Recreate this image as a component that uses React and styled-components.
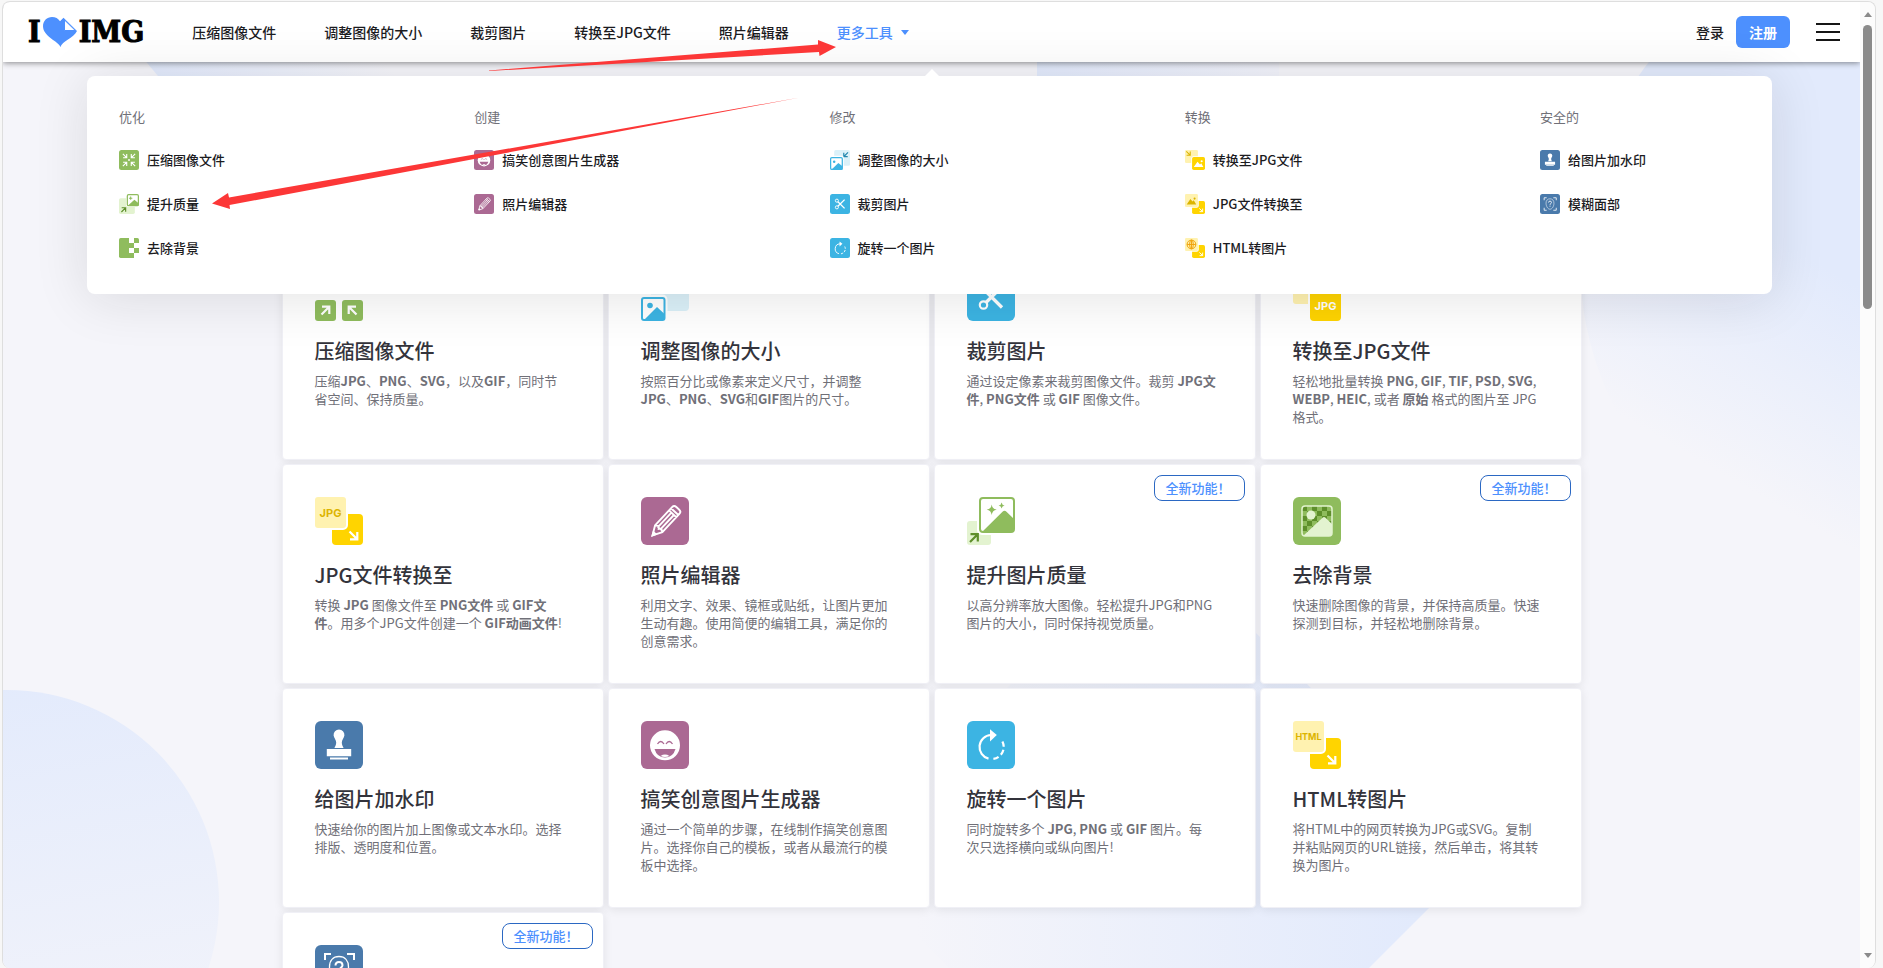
import React, { useState } from "react";
import styled, { createGlobalStyle } from "styled-components";

const GlobalStyle = createGlobalStyle`
  * {
    box-sizing: border-box;
  }
  body {
    margin: 0;
    background: #f7f7f7;
    color: #1c1c1f;
    font-family: "Noto Sans CJK SC", "Noto Sans", sans-serif;
    font-size: 14px;
  }
  a {
    color: inherit;
    text-decoration: none;
  }
`;

// Window
const Page = styled.div`
  position: relative;
  height: 100vh;
  padding: 1px 7px 0 2px;
  overflow: hidden;
`;

const Frame = styled.div`
  display: flex;
  height: 100%;
  border: 1px solid #dedede;
  border-bottom: 0;
  border-radius: 8px;
  overflow: hidden;
`;

const Viewport = styled.div`
  position: relative;
  flex: 1;
  min-width: 0;
  overflow: hidden;
  background: #f5f5fa;
`;

const ScrollBar = styled.div`
  width: 15px;
  padding: 10px 3px;
  display: flex;
  flex-direction: column;
  align-items: center;
  gap: 8px;
  background: #fcfcfc;
`;

const ScrollThumb = styled.div`
  width: 9px;
  height: 30%;
  border-radius: 5px;
  background: #8b8b8b;
`;

const ScrollArrow = styled.div`
  border: 4px solid transparent;
  border-top-width: ${(props) => (props.$down ? "5px" : "0")};
  border-bottom-width: ${(props) => (props.$down ? "0" : "5px")};
  border-top-color: ${(props) => (props.$down ? "#8b8b8b" : "transparent")};
  border-bottom-color: ${(props) => (props.$down ? "transparent" : "#8b8b8b")};
  margin-top: ${(props) => (props.$down ? "auto" : "0")};
`;

// Background shapes
const Shape = styled.div`
  position: absolute;
`;

const CircleLeft = styled(Shape)`
  left: -208px;
  top: 688px;
  width: 424px;
  height: 424px;
  border-radius: 50%;
  background: linear-gradient(170deg, #e2eafc, #f5f5fa 100%);
`;

const CircleRight = styled(Shape)`
  right: -370px;
  top: -65px;
  width: 650px;
  height: 650px;
  border-radius: 50%;
  background: linear-gradient(30deg, #f5f5fa 19%, #e2eafc 45%);
`;

const Diamond = styled(Shape)`
  left: 50%;
  top: 628px;
  width: 454px;
  height: 454px;
  transform: rotate(45deg);
  background: linear-gradient(45deg, #f5f5fa 12%, #e2eafc 90%);
`;

const TopLeftShape = styled(Shape)`
  left: 202px;
  top: 30px;
  width: 240px;
  height: 200px;
  transform: skewX(40deg);
  background: linear-gradient(90deg, #e2eafc, #f5f5fa);
`;

const TopRightShape = styled(Shape)`
  left: 1034px;
  top: 0;
  width: 242px;
  height: 200px;
  background: linear-gradient(90deg, #e2eafc, #f2f3fb);
`;

// Header
const Header = styled.header`
  position: relative;
  display: flex;
  align-items: center;
  height: 60px;
  padding: 0 20px 0 25px;
  background: white;
  box-shadow: 0 1px 6px rgba(0, 0, 0, 0.45);
`;

const Logo = styled.a`
  display: flex;
  align-items: center;
  gap: 2px;
  margin-right: 48px;
  color: black;
  font-family: "DejaVu Serif Condensed", "DejaVu Serif", serif;
  font-size: 30px;
  font-weight: 700;
  line-height: 30px;
  -webkit-text-stroke: 1px black;
`;

const Nav = styled.nav`
  display: flex;
  align-items: center;
  gap: 48px;
`;

const NavLink = styled.a`
  font-weight: 500;
  line-height: 20px;
  white-space: nowrap;
`;

const MoreButton = styled.button`
  display: flex;
  align-items: center;
  gap: 8px;
  padding: 0;
  border: 0;
  background: none;
  color: #4d90fe;
  font: inherit;
  font-weight: 500;
  line-height: 20px;
  cursor: pointer;
`;

const Caret = styled.span`
  border: 4px solid transparent;
  border-top: 5px solid #4d90fe;
  border-bottom: 0;
`;

const Account = styled.div`
  display: flex;
  align-items: center;
  gap: 12px;
  margin-left: auto;
`;

const SignUp = styled.a`
  padding: 6px 13px;
  margin-right: 14px;
  border-radius: 6px;
  background: #4d90fe;
  color: white;
  font-weight: 700;
  line-height: 20px;
`;

const MenuButton = styled.button`
  display: flex;
  flex-direction: column;
  gap: 6px;
  width: 24px;
  padding: 0;
  border: 0;
  background: none;
  cursor: pointer;
`;

const MenuLine = styled.span`
  width: 100%;
  height: 2px;
  background: #161616;
`;

// Tools menu
const MegaMenu = styled.div`
  position: absolute;
  top: 74px;
  left: 84px;
  right: 88px;
  display: flex;
  justify-content: space-between;
  padding: 32px 32px 24px;
  border-radius: 8px;
  background: white;
  box-shadow: 0 4px 54px rgba(22, 22, 22, 0.12);
  &::before {
    content: "";
    position: absolute;
    top: -7px;
    left: calc(50% - 5px);
    border: 7px solid transparent;
    border-top: 0;
    border-bottom-color: white;
  }
`;

const MenuColumn = styled.div`
  width: 200px;
`;

const MenuTitle = styled.div`
  margin-bottom: 12px;
  color: #707078;
  font-size: 13px;
  line-height: 18px;
`;

const MenuItem = styled.a`
  display: flex;
  align-items: center;
  gap: 8px;
  padding: 12px 0;
  font-size: 13px;
  font-weight: 500;
  line-height: 20px;
`;

// Tool cards
const Main = styled.main`
  position: relative;
  padding: 178px 20px 0;
`;

const Grid = styled.div`
  display: grid;
  grid-template-columns: repeat(4, 1fr);
  gap: 4px;
  max-width: 1300px;
  margin: 0 auto;
`;

const Card = styled.a`
  position: relative;
  display: block;
  min-height: 220px;
  padding: 32px 38px 32px 32px;
  border: 1px solid #f0f0f6;
  border-radius: 4px;
  background: white;
  box-shadow: 0 2px 10px rgba(0, 0, 0, 0.08);
`;

const CardTitle = styled.h3`
  margin: 16px 0 7px;
  color: #33333b;
  font-size: 20px;
  font-weight: 500;
  line-height: 28px;
`;

const CardText = styled.p`
  margin: 0;
  color: #707078;
  font-size: 13px;
  line-height: 18px;
`;

const Badge = styled.span`
  position: absolute;
  top: 10px;
  right: 10px;
  width: 91px;
  padding: 0 11px;
  border: 1px solid #2b68c3;
  border-radius: 8px;
  color: #4d90fe;
  font-size: 13px;
  font-weight: 500;
  line-height: 24px;
  white-space: nowrap;
`;

const Svg = styled.svg`
  display: block;
  flex: none;
`;

const Marks = styled.svg`
  position: absolute;
  top: 0;
  left: 0;
  pointer-events: none;
`;

const GREEN = "#8fbc5d";
const PALE_GREEN = "#e3f3d0";
const DARK_GREEN = "#5e8f2b";
const BLUE = "#3cb4e3";
const YELLOW = "#ffd400";
const PALE_YELLOW = "#fff2b0";
const PLUM = "#ab6993";
const NAVY = "#4a7aab";

const Icon = ({ size = 48, children }) => (
  <Svg width={size} height={size} viewBox="0 0 48 48" aria-hidden="true">
    {children}
  </Svg>
);

const Tile = ({ color }) => <rect width="48" height="48" rx="6" fill={color} />;

// Arrow drawn towards the lower right, turned for the other directions
const Arrow = ({ x, y, turn = 0, color = "white", size = 1 }) => (
  <path
    d="M-4-4 3.5 3.5M3.8-3.5v7.3h-7.3"
    transform={`translate(${x} ${y}) rotate(${turn}) scale(${size})`}
    fill="none"
    stroke={color}
    strokeWidth="2.2"
  />
);

const CompressIcon = ({ size }) => (
  <Icon size={size}>
    <rect width="21" height="21" rx="3" fill={GREEN} />
    <rect x="27" width="21" height="21" rx="3" fill={GREEN} />
    <rect y="27" width="21" height="21" rx="3" fill={GREEN} />
    <rect x="27" y="27" width="21" height="21" rx="3" fill={GREEN} />
    <Arrow x={10.5} y={10.5} />
    <Arrow x={37.5} y={10.5} turn={90} />
    <Arrow x={10.5} y={37.5} turn={-90} />
    <Arrow x={37.5} y={37.5} turn={180} />
  </Icon>
);

const CompressSmallIcon = ({ size }) => (
  <Icon size={size}>
    <Tile color={GREEN} />
    <Arrow x={14} y={14} size={1.2} />
    <Arrow x={34} y={14} turn={90} size={1.2} />
    <Arrow x={14} y={34} turn={-90} size={1.2} />
    <Arrow x={34} y={34} turn={180} size={1.2} />
    <rect x="22" y="22" width="4" height="4" fill="white" />
  </Icon>
);

const UpscaleIcon = ({ size }) => (
  <Icon size={size}>
    <rect y="24" width="24" height="24" rx="3" fill={PALE_GREEN} />
    <rect x="10" y="-2" width="40" height="40" rx="5" fill="white" />
    <rect x="13" y="1" width="34" height="34" rx="3" fill="white" stroke={GREEN} strokeWidth="2" />
    <path d="M15 35 35.500 14.700Q37.500 12.700 39.500 14.700L47 22v10q0 3-3 3z" fill={GREEN} />
    <path d="M24.700 7.500q.6 4.600 5 5.200-4.400.6-5 5.200-.6-4.600-5-5.200 4.400-.6 5-5.200zM34.600 5.500q.4 2.600 3 3-2.600.4-3 3-.4-2.600-3-3 2.600-.4 3-3z" fill={GREEN} />
    <Arrow x={7} y={41} turn={-90} color={DARK_GREEN} />
  </Icon>
);

const UpscaleSmallIcon = ({ size }) => (
  <Icon size={size}>
    <rect y="10" width="38" height="38" rx="4" fill={PALE_GREEN} />
    <rect x="17" y="-2" width="33" height="33" rx="5" fill="white" />
    <rect x="20" y="1.500" width="26.500" height="26.500" rx="3" fill="white" stroke={GREEN} strokeWidth="3" />
    <path d="M21 28 37 14l10 8v6z" fill={GREEN} />
    <path d="M28 6v8M24 10h8" stroke={GREEN} strokeWidth="2.500" />
    <Arrow x={11} y={38} turn={-90} color={DARK_GREEN} size={1.3} />
  </Icon>
);

const RemoveBgIcon = ({ size }) => (
  <Icon size={size}>
    <defs>
      <pattern id="checks" width="10" height="10" x="9" y="9" patternUnits="userSpaceOnUse">
        <rect width="10" height="10" fill={GREEN} />
        <rect width="5" height="5" fill={DARK_GREEN} />
        <rect x="5" y="5" width="5" height="5" fill={DARK_GREEN} />
      </pattern>
    </defs>
    <Tile color={GREEN} />
    <rect x="9" y="9" width="30" height="30" rx="3" fill="url(#checks)" stroke={PALE_GREEN} strokeWidth="1.500" />
    <circle cx="18" cy="18" r="4.500" fill={PALE_GREEN} />
    <path d="M10 39 29.500 20.700q1.500-1.400 3 0L39 27v9q0 3-3 3z" fill={PALE_GREEN} />
  </Icon>
);

const RemoveBgSmallIcon = ({ size }) => (
  <Icon size={size}>
    <path d="M4 0h20v48H4q-4 0-4-4V4q0-4 4-4z" fill={GREEN} />
    <path d="M36 0h8q4 0 4 4v8H36zM24 12h12v12H24zM36 24h12v12H36zM24 36h12v12H24z" fill={GREEN} />
  </Icon>
);

const MemeIcon = ({ size }) => (
  <Icon size={size}>
    <Tile color={PLUM} />
    <circle cx="24" cy="24.300" r="15" fill="white" />
    <path d="M16.500 23q3.200-5 6.500 0M25 23q3.200-5 6.500 0" fill="none" stroke={PLUM} strokeWidth="1.300" />
    <path d="M13.500 28h21q-2.500 8.500-10.500 8.500T13.500 28z" fill={PLUM} />
    <path d="M19.500 35q4.500-2.800 9 0-4.500 2.200-9 0z" fill="white" />
  </Icon>
);

const EditorIcon = ({ size }) => (
  <Icon size={size}>
    <Tile color={PLUM} />
    <g transform="translate(24.500 24.500) rotate(43)" fill="none" stroke="white" strokeWidth="1.900">
      <path d="M-5 10v-25q0-3 3-3h4q3 0 3 3v25L0 19zM-5-13.500H5M-5-10.500H5M-1.700-10.500V10M1.700-10.500V10M-5 10l3.300-2L0 10l1.700-2L5 10" />
      <path d="M-1.500 16h3L0 19z" fill="white" />
    </g>
  </Icon>
);

const ResizeIcon = ({ size }) => (
  <Icon size={size}>
    <rect x="10" width="38" height="38" rx="4" fill="#dbf1f9" />
    <Arrow x={38} y={10} turn={90} color="#2488ae" />
    <rect x="-2" y="21.500" width="28.500" height="28.500" rx="5" fill="white" />
    <rect x="1" y="25" width="22.500" height="22" rx="2" fill="white" stroke={BLUE} strokeWidth="2" />
    <circle cx="9" cy="32.500" r="2.800" fill={BLUE} />
    <path d="M3 47 16 34l7.500 7v6z" fill={BLUE} />
  </Icon>
);

const ResizeSmallIcon = ({ size }) => (
  <Icon size={size}>
    <rect x="10" width="38" height="38" rx="4" fill="#dbf1f9" />
    <Arrow x={38} y={11} turn={90} color="#2488ae" size={1.3} />
    <rect x="-2" y="14" width="35" height="36" rx="5" fill="white" />
    <rect x="1.500" y="18" width="28" height="28.500" rx="3" fill="white" stroke={BLUE} strokeWidth="3" />
    <circle cx="10" cy="28" r="3" fill={BLUE} />
    <path d="M4 47 20 31l10 8v8z" fill={BLUE} />
  </Icon>
);

const CropIcon = ({ size }) => (
  <Icon size={size}>
    <Tile color={BLUE} />
    <g fill="none" stroke="white">
      <circle cx="16.500" cy="16" r="3.700" strokeWidth="2.200" />
      <circle cx="16.500" cy="32" r="3.700" strokeWidth="2.200" />
      <path d="M19 18.500 35 34.500M19 29.500 35 13.500" strokeWidth="3.200" />
    </g>
  </Icon>
);

const RotateIcon = ({ size }) => (
  <Icon size={size}>
    <Tile color={BLUE} />
    <path d="M21.500 37.600A12 12 0 0 1 24 14" fill="none" stroke="white" strokeWidth="2.200" />
    <path d="M35.400 20.500A12 12 0 0 1 24.500 38" fill="none" stroke="white" strokeWidth="2.200" strokeDasharray="5.500 3" />
    <path d="M23 8.300 29.800 14 23 20.500z" fill="white" />
  </Icon>
);

// Two overlapping sheets, the pale one in front
const SheetsBase = () => (
  <>
    <rect x="17" y="17" width="31" height="31" rx="4" fill={YELLOW} />
    <rect x="-2" y="-2" width="35" height="35" rx="5" fill="white" />
    <rect width="31" height="31" rx="3" fill={PALE_YELLOW} />
    <Arrow x={38.500} y={38.500} />
  </>
);

const SheetLabel = styled.text`
  font-family: Inter, "Liberation Sans", sans-serif;
  font-size: ${(props) => (props.$small ? "9px" : "11px")};
  font-weight: 700;
  text-anchor: middle;
`;

const FromJpgIcon = ({ size }) => (
  <Icon size={size}>
    <SheetsBase />
    <SheetLabel x="15.500" y="19.500" fill="#dcb400">JPG</SheetLabel>
  </Icon>
);

const FromJpgSmallIcon = ({ size }) => (
  <Icon size={size}>
    <SheetsBase />
    <path d="M4 25 13 12l5 6 3-3 6 10z" fill="#dcb400" />
    <circle cx="23" cy="11" r="2.500" fill="#dcb400" />
  </Icon>
);

const HtmlIcon = ({ size }) => (
  <Icon size={size}>
    <SheetsBase />
    <SheetLabel $small x="15.500" y="19" fill="#dcb400">HTML</SheetLabel>
  </Icon>
);

const HtmlSmallIcon = ({ size }) => (
  <Icon size={size}>
    <SheetsBase />
    <g fill="none" stroke="#f0a30c" strokeWidth="2.400">
      <circle cx="15.500" cy="15.500" r="10.500" />
      <ellipse cx="15.500" cy="15.500" rx="4.500" ry="10.500" />
      <path d="M5 15.500h21M15.500 5v21" />
    </g>
  </Icon>
);

const ToJpgIcon = ({ size }) => (
  <Icon size={size}>
    <rect width="31" height="31" rx="3" fill={PALE_YELLOW} />
    <rect x="15" y="15" width="35" height="35" rx="5" fill="white" />
    <rect x="17" y="17" width="31" height="31" rx="4" fill={YELLOW} />
    <SheetLabel x="32.500" y="37" fill="white">JPG</SheetLabel>
  </Icon>
);

const ToJpgSmallIcon = ({ size }) => (
  <Icon size={size}>
    <rect width="31" height="31" rx="3" fill={PALE_YELLOW} />
    <Arrow x={8} y={8} color="#dcb400" size={1.2} />
    <rect x="15" y="15" width="35" height="35" rx="5" fill="white" />
    <rect x="17" y="17" width="31" height="31" rx="4" fill={YELLOW} />
    <path d="M21 41 30 28l6 7 3-3 5 9z" fill="white" />
    <circle cx="40" cy="27" r="2.500" fill="white" />
  </Icon>
);

const WatermarkIcon = ({ size }) => (
  <Icon size={size}>
    <Tile color={NAVY} />
    <path d="M24 8.500a5.500 5.500 0 0 1 5.400 6c-.4 2.500-2.600 4.500-2.600 7 0 2.200 1 4 1.800 5.500h-9.200c.8-1.500 1.800-3.300 1.800-5.500 0-2.500-2.200-4.500-2.600-7a5.500 5.500 0 0 1 5.400-6z" fill="white" />
    <path d="M11.800 28h24.400v7.300H11.800zM15 36.500h18v2H15z" fill="white" />
  </Icon>
);

const BlurFaceIcon = ({ size }) => (
  <Icon size={size}>
    <Tile color={NAVY} />
    <g fill="none" stroke="white" strokeWidth="2">
      <path d="M10 15V9h6M32 9h7v6M39 33v6h-7M16 39h-6v-6" />
      <path d="M24 11.500c6 0 9.500 4 9.500 10.500 0 7-4 14.500-9.500 14.500S14.500 29 14.500 22c0-6.500 3.500-10.500 9.500-10.500z" strokeWidth="1.300" />
      <path d="M20.500 20.500q0-3.500 3.500-3.500t3.500 3.300c0 2.500-3.500 2.700-3.500 5.700M24 28v2.500" />
    </g>
  </Icon>
);

const menu = [
  {
    title: "优化",
    items: [
      { label: "压缩图像文件", icon: CompressSmallIcon },
      { label: "提升质量", icon: UpscaleSmallIcon },
      { label: "去除背景", icon: RemoveBgSmallIcon },
    ],
  },
  {
    title: "创建",
    items: [
      { label: "搞笑创意图片生成器", icon: MemeIcon },
      { label: "照片编辑器", icon: EditorIcon },
    ],
  },
  {
    title: "修改",
    items: [
      { label: "调整图像的大小", icon: ResizeSmallIcon },
      { label: "裁剪图片", icon: CropIcon },
      { label: "旋转一个图片", icon: RotateIcon },
    ],
  },
  {
    title: "转换",
    items: [
      { label: "转换至JPG文件", icon: ToJpgSmallIcon },
      { label: "JPG文件转换至", icon: FromJpgSmallIcon },
      { label: "HTML转图片", icon: HtmlSmallIcon },
    ],
  },
  {
    title: "安全的",
    items: [
      { label: "给图片加水印", icon: WatermarkIcon },
      { label: "模糊面部", icon: BlurFaceIcon },
    ],
  },
];

const tools = [
  {
    title: "压缩图像文件",
    icon: CompressIcon,
    text: <>压缩<b>JPG</b>、<b>PNG</b>、<b>SVG</b>，以及<b>GIF</b>，同时节省空间、保持质量。</>,
  },
  {
    title: "调整图像的大小",
    icon: ResizeIcon,
    text: <>按照百分比或像素来定义尺寸，并调整<b>JPG</b>、<b>PNG</b>、<b>SVG</b>和<b>GIF</b>图片的尺寸。</>,
  },
  {
    title: "裁剪图片",
    icon: CropIcon,
    text: <>通过设定像素来裁剪图像文件。裁剪 <b>JPG文件</b>, <b>PNG文件</b> 或 <b>GIF</b> 图像文件。</>,
  },
  {
    title: "转换至JPG文件",
    icon: ToJpgIcon,
    text: (
      <>
        轻松地批量转换 <b>PNG</b>, <b>GIF</b>, <b>TIF</b>, <b>PSD</b>, <b>SVG</b>, <b>WEBP</b>, <b>HEIC</b>, 或者{" "}
        <b>原始</b> 格式的图片至 JPG 格式。
      </>
    ),
  },
  {
    title: "JPG文件转换至",
    icon: FromJpgIcon,
    text: <>转换 <b>JPG</b> 图像文件至 <b>PNG文件</b> 或 <b>GIF文件</b>。用多个JPG文件创建一个 <b>GIF动画文件</b>!</>,
  },
  {
    title: "照片编辑器",
    icon: EditorIcon,
    text: "利用文字、效果、镜框或贴纸，让图片更加生动有趣。使用简便的编辑工具，满足你的创意需求。",
  },
  {
    title: "提升图片质量",
    icon: UpscaleIcon,
    isNew: true,
    text: "以高分辨率放大图像。轻松提升JPG和PNG图片的大小，同时保持视觉质量。",
  },
  {
    title: "去除背景",
    icon: RemoveBgIcon,
    isNew: true,
    text: "快速删除图像的背景，并保持高质量。快速探测到目标，并轻松地删除背景。",
  },
  {
    title: "给图片加水印",
    icon: WatermarkIcon,
    text: "快速给你的图片加上图像或文本水印。选择排版、透明度和位置。",
  },
  {
    title: "搞笑创意图片生成器",
    icon: MemeIcon,
    text: "通过一个简单的步骤，在线制作搞笑创意图片。选择你自己的模板，或者从最流行的模板中选择。",
  },
  {
    title: "旋转一个图片",
    icon: RotateIcon,
    text: <>同时旋转多个 <b>JPG</b>, <b>PNG</b> 或 <b>GIF</b> 图片。每<br />次只选择横向或纵向图片!</>,
  },
  {
    title: "HTML转图片",
    icon: HtmlIcon,
    text: "将HTML中的网页转换为JPG或SVG。复制并粘贴网页的URL链接，然后单击，将其转换为图片。",
  },
  { icon: BlurFaceIcon, isNew: true },
];

const navLinks = ["压缩图像文件", "调整图像的大小", "裁剪图片", "转换至JPG文件", "照片编辑器"];

const App = () => {
  const [menuOpen, setMenuOpen] = useState(true);

  return (
    <>
      <GlobalStyle />
      <Page>
        <Frame>
          <Viewport>
            <CircleLeft />
            <CircleRight />
            <Diamond />
            <TopLeftShape />
            <TopRightShape />
            <Header>
              <Logo href="#" aria-label="I love IMG">
                <span>I</span>
                <Svg width="34" height="30" viewBox="0 0 34 30" aria-hidden="true">
                  <path
                    d="M17.500 30C16 24.500 0 19.500 0 9.200 0 3.800 4 0 9 0c3.500 0 6.300 1.500 8 4.200L20.500.800 34 14C30.500 21.500 19 24 17.500 30z"
                    fill="#4d90fe"
                  />
                  <path d="M21.500 3v10.500h10.800z" fill="white" stroke="#4d90fe" />
                </Svg>
                <span>IMG</span>
              </Logo>
              <Nav>
                {navLinks.map((label) => (
                  <NavLink href="#" key={label}>
                    {label}
                  </NavLink>
                ))}
                <MoreButton aria-expanded={menuOpen} onClick={() => setMenuOpen(!menuOpen)}>
                  更多工具
                  <Caret />
                </MoreButton>
              </Nav>
              <Account>
                <NavLink href="#">登录</NavLink>
                <SignUp href="#">注册</SignUp>
                <MenuButton aria-label="菜单">
                  <MenuLine />
                  <MenuLine />
                  <MenuLine />
                </MenuButton>
              </Account>
            </Header>
            <Main>
              <Grid>
                {tools.map(({ title, icon: ToolIcon, text, isNew }, index) => (
                  <Card href="#" key={index}>
                    <ToolIcon />
                    {title ? <CardTitle>{title}</CardTitle> : null}
                    {text ? <CardText>{text}</CardText> : null}
                    {isNew ? <Badge>全新功能！</Badge> : null}
                  </Card>
                ))}
              </Grid>
            </Main>
            {menuOpen ? (
              <MegaMenu>
                {menu.map((column) => (
                  <MenuColumn key={column.title}>
                    <MenuTitle>{column.title}</MenuTitle>
                    {column.items.map(({ label, icon: ItemIcon }) => (
                      <MenuItem href="#" key={label}>
                        <ItemIcon size={20} />
                        {label}
                      </MenuItem>
                    ))}
                  </MenuColumn>
                ))}
              </MegaMenu>
            ) : null}
          </Viewport>
          <ScrollBar>
            <ScrollArrow />
            <ScrollThumb />
            <ScrollArrow $down />
          </ScrollBar>
        </Frame>
        {/* Hand-drawn pointers */}
        <Marks width="840" height="220" aria-hidden="true">
          <path d="M489 70.500 818 44.500V40l18 7-16.500 9-.5-4L489 71z" fill="#fc3737" />
          <path d="M212 203.500 228 193l1 4.500L800 97.500 229.500 205l.5 4z" fill="#fc3737" />
        </Marks>
      </Page>
    </>
  );
};

export default App;
